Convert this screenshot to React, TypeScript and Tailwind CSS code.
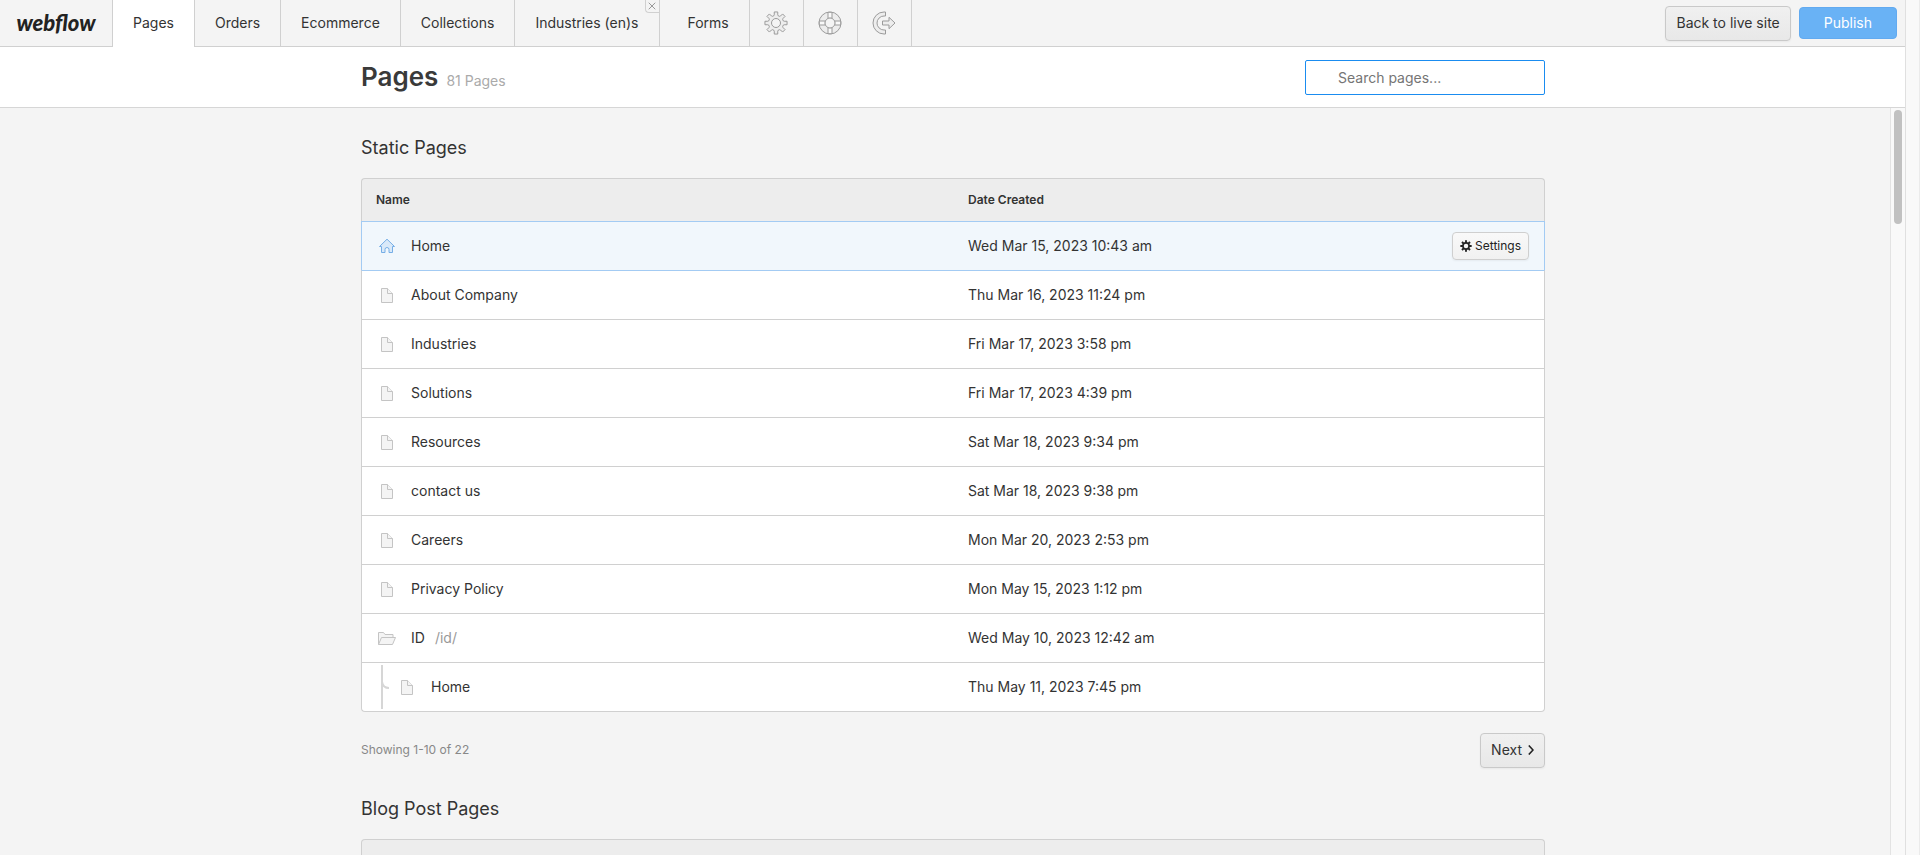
import { X } from 'lucide-react'
import type { ReactNode } from 'react'

type PageRow = {
  name: string
  date: string
  icon: 'home' | 'page' | 'folder'
  slug?: string
  nested?: boolean
  active?: boolean
}

const staticPages: PageRow[] = [
  { name: 'Home', date: 'Wed Mar 15, 2023 10:43 am', icon: 'home', active: true },
  { name: 'About Company', date: 'Thu Mar 16, 2023 11:24 pm', icon: 'page' },
  { name: 'Industries', date: 'Fri Mar 17, 2023 3:58 pm', icon: 'page' },
  { name: 'Solutions', date: 'Fri Mar 17, 2023 4:39 pm', icon: 'page' },
  { name: 'Resources', date: 'Sat Mar 18, 2023 9:34 pm', icon: 'page' },
  { name: 'contact us', date: 'Sat Mar 18, 2023 9:38 pm', icon: 'page' },
  { name: 'Careers', date: 'Mon Mar 20, 2023 2:53 pm', icon: 'page' },
  { name: 'Privacy Policy', date: 'Mon May 15, 2023 1:12 pm', icon: 'page' },
  { name: 'ID', slug: '/id/', date: 'Wed May 10, 2023 12:42 am', icon: 'folder' },
  { name: 'Home', date: 'Thu May 11, 2023 7:45 pm', icon: 'page', nested: true },
]

const tabs = ['Orders', 'Ecommerce', 'Collections']

// outline of a cog: [angle offset, radius] for each corner of a tooth
function cog(teeth: number, corners: [number, number][]) {
  const points: string[] = []
  for (let i = 0; i < teeth; i++) {
    for (const [offset, radius] of corners) {
      const a = ((i * 360) / teeth + offset) * (Math.PI / 180)
      points.push(`${(12 + radius * Math.sin(a)).toFixed(2)},${(12 - radius * Math.cos(a)).toFixed(2)}`)
    }
  }
  return points.join(' ')
}

const gearOutline = cog(8, [[-16, 7.6], [-12, 8.4], [-9, 11.2], [9, 11.2], [12, 8.4], [16, 7.6]])
const settingsOutline = cog(8, [[-13, 8], [-10, 11.5], [10, 11.5], [13, 8]])

function GearIcon() {
  return (
    <svg className="size-6" viewBox="0 0 24 24" fill="#ededed" stroke="#9b9b9b" strokeLinejoin="round">
      <polygon points={gearOutline} />
      <circle cx="12" cy="12" r="4.5" fill="#f4f4f4" />
    </svg>
  )
}

function HelpIcon() {
  return (
    <svg className="size-6" viewBox="0 0 24 24" fill="none" stroke="#9b9b9b">
      <circle cx="12" cy="12" r="11" fill="#ededed" />
      <path d="M10 1.300h4v6h-4zM10 16.700h4v6h-4zM1.300 10h6v4h-6zM16.700 10h6v4h-6z" fill="#f9f9f9" />
      <circle cx="12" cy="12" r="5" fill="#f4f4f4" />
    </svg>
  )
}

function LogoutIcon() {
  return (
    <svg className="size-6" viewBox="0 0 24 24" fill="#ededed" stroke="#9b9b9b">
      <path d="M13.500 1H12a11 11 0 0 0 0 22h1.500v-4H12a7 7 0 0 1 0-14h1.500z" />
      <path d="M10.500 10h6.500V6.300l6 5.700-6 5.700V14h-6.500z" strokeLinejoin="round" />
    </svg>
  )
}

function RowIcon({ icon }: { icon: PageRow['icon'] }) {
  if (icon === 'home') {
    return (
      <svg className="h-4 w-5" viewBox="0 0 20 16" fill="#d9e9f9" stroke="#76aee6">
        <path d="M10 1.200 2.500 8.500h2v6h3.500v-3a2 2 0 0 1 4 0v3h3.500v-6h2z" strokeLinejoin="round" />
      </svg>
    )
  }
  if (icon === 'folder') {
    return (
      <svg className="h-4 w-5" viewBox="0 0 20 16" fill="#f4f4f4" stroke="#c4c4c4">
        <path d="M1.500 14.500v-12h5l1.500 2h8v3" />
        <path d="M1.500 14.500 4.500 7.500h14l-3 7z" />
      </svg>
    )
  }
  return (
    <svg className="h-4 w-5" viewBox="0 0 20 16" fill="#f4f4f4" stroke="#c4c4c4">
      <path d="M4.500 1.500h6l5 5v9h-11z" />
      <path d="M10.500 1.500v5h5" />
    </svg>
  )
}

function SettingsButton() {
  return (
    <button className="flex h-7 items-center gap-[3px] rounded-sm border border-[#cfcfcf] bg-linear-to-b from-[#f9f9f9] to-[#f1f1f1] px-[7px] text-xs text-[#222] shadow-xs">
      <svg className="size-3" viewBox="0 0 24 24">
        <polygon points={settingsOutline} fill="#222" />
        <circle cx="12" cy="12" r="4.5" fill="#f5f5f5" />
      </svg>
      Settings
    </button>
  )
}

function IconTab({ label, children }: { label: string; children: ReactNode }) {
  return (
    <a href="#" aria-label={label} className="flex w-[54px] items-center justify-center border-r border-b border-[#d0d0d0]">
      {children}
    </a>
  )
}

function TopBar() {
  return (
    <header className="flex h-[47px] text-sm text-[#333]">
      <a
        href="#"
        className="flex w-[113px] items-center justify-center border-r border-b border-[#d0d0d0] font-[Lato,sans-serif] text-[22px] font-black text-[#222] italic"
      >
        webflow
      </a>
      <nav className="flex">
        <a href="#" className="flex items-center border-r border-[#d0d0d0] bg-white px-5 pb-px">Pages</a>
        {tabs.map((tab) => (
          <a key={tab} href="#" className="flex items-center border-r border-b border-[#d0d0d0] px-5">
            {tab}
          </a>
        ))}
        <div className="relative flex border-r border-b border-[#d0d0d0]">
          <a href="#" className="flex items-center px-5">Industries (en)s</a>
          <button
            aria-label="Close tab"
            className="absolute top-0 right-0 flex h-[13px] w-3.5 items-center justify-center rounded-bl-sm border-b border-l border-[#d0d0d0] text-[#999]"
          >
            <X size={12} strokeWidth={2} />
          </button>
        </div>
        <a href="#" className="flex items-center border-r border-b border-[#d0d0d0] pr-5 pl-7">Forms</a>
        <IconTab label="Settings"><GearIcon /></IconTab>
        <IconTab label="Help"><HelpIcon /></IconTab>
        <IconTab label="Log out"><LogoutIcon /></IconTab>
      </nav>
      <div className="flex flex-1 items-center justify-end gap-2 border-b border-[#d0d0d0] pr-[9px]">
        <button className="h-[35px] rounded-sm border border-[#c9c9c9] bg-linear-to-b from-[#f0f0f0] to-[#e8e8e8] px-2.5 shadow-xs">
          Back to live site
        </button>
        <button className="h-8 rounded-sm border border-[#62aaf0] bg-[#69b2f5] px-6 text-white">Publish</button>
      </div>
    </header>
  )
}

function PagesTable({ rows }: { rows: PageRow[] }) {
  return (
    <table className="w-full table-fixed border-separate border-spacing-0 text-left text-sm text-[#333]">
      <thead className="bg-[#ededed] text-xs">
        <tr>
          <th className="h-[43px] rounded-tl border-t border-l border-[#d0d0d0] px-3.5 font-semibold">Name</th>
          <th className="rounded-tr border-t border-r border-[#d0d0d0] px-[15px] font-semibold">Date Created</th>
        </tr>
      </thead>
      <tbody>
        {rows.map((row, i) => {
          const last = i === rows.length - 1
          const line = row.active ? 'border-[#a3cbf3]' : 'border-[#d0d0d0]'
          const top = row.active || rows[i - 1]?.active ? 'border-t-[#a3cbf3]' : 'border-t-[#d0d0d0]'
          return (
            <tr key={i} className={row.active ? 'bg-[#f1f7fc]' : ''}>
              <td
                className={`${line} ${top} border-t border-l p-0 pl-[15px] ${last ? 'h-[50px] rounded-bl border-b' : 'h-[49px]'} ${row.active ? '' : 'bg-white'}`}
              >
                <div className="flex items-center">
                  {row.nested && (
                    <svg className="h-11 w-5" viewBox="0 0 20 44" fill="none" stroke="#d6d6d6" strokeWidth="2">
                      <path d="M5 0v44M5 17q1 6 7 6" />
                    </svg>
                  )}
                  <RowIcon icon={row.icon} />
                  <span className="ml-3.5">{row.name}</span>
                  {row.slug && <span className="ml-2.5 text-[#999]">{row.slug}</span>}
                </div>
              </td>
              <td
                className={`${line} ${top} border-t border-r p-0 px-[15px] ${last ? 'rounded-br border-b' : ''} ${row.active ? '' : 'bg-white'}`}
              >
                <div className="flex items-center justify-between">
                  {row.date}
                  {row.active && <SettingsButton />}
                </div>
              </td>
            </tr>
          )
        })}
      </tbody>
    </table>
  )
}

export default function App() {
  return (
    <div className="flex h-screen overflow-hidden bg-[#f4f4f4] font-[Inter,sans-serif]">
      <div className="flex min-w-0 flex-1 flex-col">
        <TopBar />
        <div className="border-b border-[#d6d6d6] bg-white">
          <div className="mx-auto flex h-[60px] max-w-[1184px] items-center justify-between">
            <div className="flex items-baseline gap-2 pb-0.5">
              <h1 className="text-[26px] font-semibold text-[#3a3a3a]">Pages</h1>
              <span className="text-sm text-[#aaa]">81 Pages</span>
            </div>
            <input
              type="search"
              aria-label="Search pages"
              placeholder="Search pages..."
              autoFocus
              className="h-[35px] w-60 rounded-xs border border-[#1a8cf0] bg-white pr-2 pl-8 text-sm text-[#333] outline-none placeholder:text-[#757575]"
            />
          </div>
        </div>
        <div className="relative min-h-0 flex-1 overflow-hidden">
          <main className="mx-auto max-w-[1184px]">
            <h2 className="pt-[26px] pb-4 text-lg text-[#333]">Static Pages</h2>
            <PagesTable rows={staticPages} />
            <div className="mt-5 mb-px flex h-9 items-center justify-between">
              <span className="text-xs text-[#888]">Showing 1-10 of 22</span>
              <button className="flex h-[35px] items-center gap-1.5 rounded-sm border border-[#c9c9c9] bg-linear-to-b from-[#f0f0f0] to-[#e8e8e8] px-2.5 text-sm text-[#333] shadow-xs">
                Next
                <svg className="h-2.5 w-1.5" viewBox="0 0 6 10" fill="none" stroke="#222" strokeWidth="1.6">
                  <path d="m.8.5 4.200 4.500-4.200 4.500" />
                </svg>
              </button>
            </div>
            <h2 className="pt-[26px] pb-4 text-lg text-[#333]">Blog Post Pages</h2>
            <div className="h-[43px] rounded-t border border-b-0 border-[#d0d0d0] bg-[#ededed]" />
          </main>
          <div className="absolute inset-y-0 right-0 w-4 border-l border-[#e3e3e3] bg-[#f9f9f9] pt-[2px] pl-[3px]">
            <div className="h-[114px] w-2 rounded-full bg-[#c1c1c1]" />
          </div>
        </div>
      </div>
      <div className="relative w-3.5 border-r border-[#ebebeb] bg-[#f9f9f9] shadow-[-1px_0_0_#e0e0e0]" />
    </div>
  )
}
